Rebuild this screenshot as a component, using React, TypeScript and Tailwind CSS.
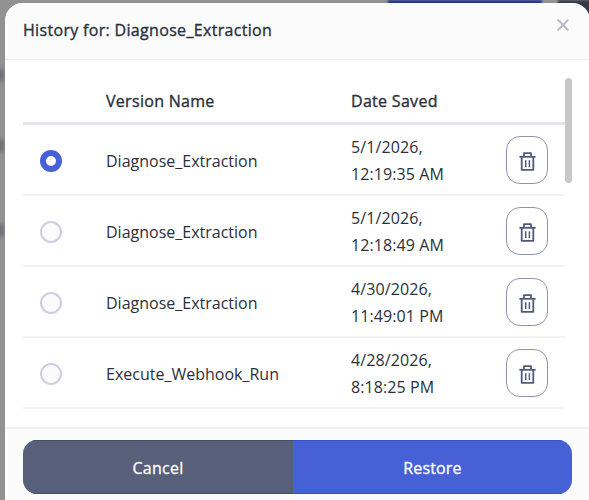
import React from "react";

interface Version {
  name: string;
  date: string;
  time: string;
}

const versions: Version[] = [
  { name: "Diagnose_Extraction", date: "5/1/2026,", time: "12:19:35 AM" },
  { name: "Diagnose_Extraction", date: "5/1/2026,", time: "12:18:49 AM" },
  { name: "Diagnose_Extraction", date: "4/30/2026,", time: "11:49:01 PM" },
  { name: "Execute_Webhook_Run", date: "4/28/2026,", time: "8:18:25 PM" },
];

function TrashIcon() {
  return (
    <svg width="17" height="19" viewBox="0 0 17 19" fill="none" stroke="#505b7c" strokeWidth="1.8" strokeLinejoin="round">
      <path d="M0.4 4.8H16.6" />
      <path d="M5 4.8V1.2H12V4.8" />
      <path d="M2.7 4.8V17.8H14.3V4.8" />
      <path d="M6.7 8.2V15M10.4 8.2V15" strokeWidth="1.5" />
    </svg>
  );
}

function Radio({ checked }: { checked: boolean }) {
  return checked ? (
    <span className="block size-[22px] rounded-full border-[6px] border-[#4661d6] bg-white" />
  ) : (
    <span className="block size-[22px] rounded-full border-2 border-[#cdcfdf] bg-[#fbfbfc]" />
  );
}

export default function App() {
  return (
    <div className="relative h-[500px] w-[589px] overflow-hidden bg-[#929292] pl-[5px] pt-[3px] font-['Open_Sans','Noto_Sans',sans-serif] text-[16px] text-[#2b303b]">
      <div className="absolute left-[388px] top-0 h-2 w-[154px] bg-[#21368e] blur-[1px]" />
      <div className="absolute left-[558px] top-0 h-10 w-[40px] bg-[#363b48] blur-[1px]" />
      <div className="absolute -left-2 top-[69px] h-3 w-3 bg-[#6d6f76] blur-[2px]" />
      <div className="absolute -left-2 top-[140px] h-3 w-3 bg-[#6d6f76] blur-[2px]" />
      <div className="absolute -left-2 top-[224px] h-3 w-3 bg-[#6d6f76] blur-[2px]" />
      <div className="relative flex h-[510px] w-[585px] flex-col rounded-[18px] bg-white">
        <header className="flex h-[57px] shrink-0 justify-between rounded-t-[18px] border-b border-[#ececef] bg-[#fbfbfc] pl-[18px] pr-[21px]">
          <h1 className="mt-[15px] text-[16px] leading-6 tracking-[0.32px] whitespace-nowrap [-webkit-text-stroke:0.35px_#2b303b]">History for: Diagnose_Extraction</h1>
          <svg className="mt-4 size-3" viewBox="0 0 12 12" fill="none" stroke="#b9bccb" strokeWidth="2" strokeLinecap="round">
            <path d="M1.3 1.3L10.7 10.7M10.7 1.3L1.3 10.7" />
          </svg>
        </header>
        <main className="flex h-[367px] shrink-0 pl-[18px] pt-[18px]">
          <div className="w-[542px]">
            <div className="flex h-[47px] items-center border-b-[3px] border-[#e4e5ec] pl-[83px] pt-[2px] tracking-[0.3px] [-webkit-text-stroke:0.35px_#2b303b]">
              <span className="w-[245px] whitespace-nowrap">Version Name</span>
              <span className="whitespace-nowrap">Date Saved</span>
            </div>
            {versions.map((v, i) => (
              <div key={i} className="flex h-[71px] items-center border-b-2 border-[#f3f3f5] pl-[17px]">
                <div className="flex items-center pt-[2px]">
                  <Radio checked={i === 0} />
                  <span className="ml-[44px] w-[245px] whitespace-nowrap">{v.name}</span>
                  <span className="w-[155px] leading-[27px] tracking-[0.1px] whitespace-nowrap">
                    {v.date}
                    <br />
                    {v.time}
                  </span>
                </div>
                <button className="flex h-12 w-[42px] shrink-0 items-center justify-center rounded-[14px] border border-[#8e95b0] pt-[3px]">
                  <TrashIcon />
                </button>
              </div>
            ))}
          </div>
          <div className="h-[105px] w-[7px] rounded-full bg-[#c8c8c8]" />
        </main>
        <footer className="h-[83px] shrink-0 border-t-2 border-[#eff0f5] bg-[#fbfbfc] pl-[18px] pt-[11px]">
          <div className="flex h-[54px] w-[549px] overflow-hidden rounded-[14px] text-white [-webkit-text-stroke:0.3px_white]">
            <button className="w-[270px] border-y border-[#454c70] bg-[#575f79] pt-[2px] tracking-[0.25px]">Cancel</button>
            <button className="w-[279px] border-y border-[#3550d0] bg-[#4661d6] pt-[2px] tracking-[0.15px]">Restore</button>
          </div>
        </footer>
      </div>
    </div>
  );
}
